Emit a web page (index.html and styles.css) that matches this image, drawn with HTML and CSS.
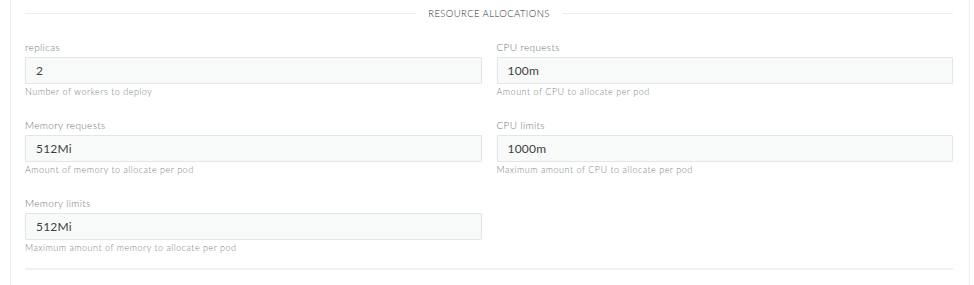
FILE: index.html
```html
<!DOCTYPE html>
<html lang="en">
<head>
    <meta charset="UTF-8">
    <title>Resource allocations</title>
    <link rel="stylesheet" href="styles.css">
</head>
<body>
    <div class="panel">
        <div class="section-title">
            <span class="rule"></span>
            <h4>Resource Allocations</h4>
            <span class="rule"></span>
        </div>
        <div class="fields">
            <div class="field">
                <label for="replicas">replicas</label>
                <input type="text" id="replicas" value="2">
                <p class="help">Number of workers to deploy</p>
            </div>
            <div class="field">
                <label for="cpuRequests">CPU requests</label>
                <input type="text" id="cpuRequests" value="100m">
                <p class="help">Amount of CPU to allocate per pod</p>
            </div>
            <div class="field">
                <label for="memRequests">Memory requests</label>
                <input type="text" id="memRequests" value="512Mi">
                <p class="help">Amount of memory to allocate per pod</p>
            </div>
            <div class="field">
                <label for="cpuLimits">CPU limits</label>
                <input type="text" id="cpuLimits" value="1000m">
                <p class="help">Maximum amount of CPU to allocate per pod</p>
            </div>
            <div class="field">
                <label for="memLimits">Memory limits</label>
                <input type="text" id="memLimits" value="512Mi">
                <p class="help">Maximum amount of memory to allocate per pod</p>
            </div>
        </div>
        <hr class="divider">
    </div>
</body>
</html>
```

FILE: styles.css
```css
body {
    margin: 0;
    background-color: #fff;
    font-family: 'Lato', 'Open Sans', sans-serif;
}

.panel {
    margin-left: 10px;
    width: 960px;
    height: 285px;
    padding: 0 16px 0 14px;
    box-sizing: border-box;
    border-left: 1px solid #eceeee;
    border-right: 1px solid #eceeee;
}

.section-title {
    display: flex;
    align-items: center;
    height: 26px;
    gap: 12px;
}

.section-title .rule {
    flex: 1;
    height: 1px;
    background-color: #e9eded;
}

.section-title h4 {
    margin: 0;
    font-size: 9.5px;
    font-weight: 300;
    text-transform: uppercase;
    letter-spacing: 0.4px;
    color: #2c3030;
}

.fields {
    display: grid;
    grid-template-columns: 1fr 1fr;
    column-gap: 15px;
    row-gap: 20px;
    margin-top: 14px;
}

.field label {
    display: block;
    height: 14px;
    line-height: 14px;
    margin-bottom: 3px;
    font-size: 10px;
    font-weight: 300;
    letter-spacing: 0.35px;
    color: #6f7474;
}

.field input {
    display: block;
    width: 100%;
    height: 27px;
    box-sizing: border-box;
    padding: 0 10px;
    border: 1px solid #e1e6e6;
    border-radius: 1px;
    background-color: #f8fafa;
    font-family: inherit;
    font-size: 12px;
    letter-spacing: 0.2px;
    color: #3a3f3f;
}

.field .help {
    margin: 2px 0 0;
    height: 12px;
    line-height: 12px;
    font-size: 9px;
    font-weight: 300;
    letter-spacing: 0.5px;
    color: #7c8181;
}

.divider {
    margin: 14px 0 0;
    height: 2px;
    border: none;
    background-color: #edf1f1;
}
```
